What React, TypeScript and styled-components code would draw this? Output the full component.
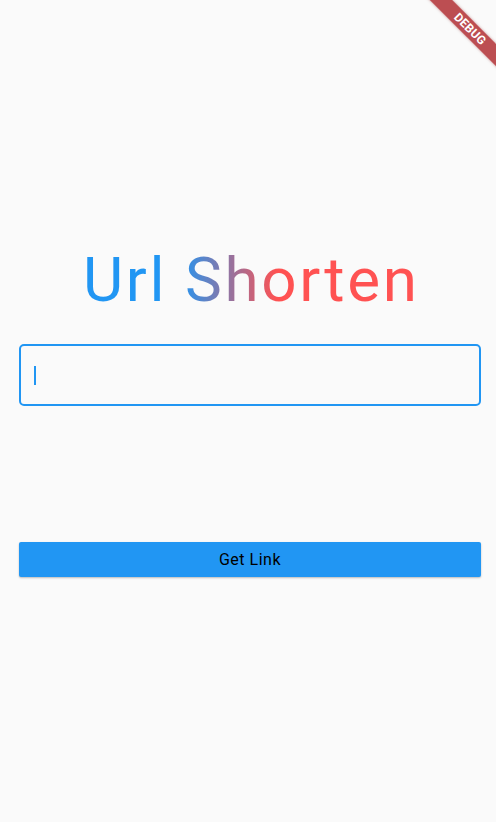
import React from "react";
import styled, { createGlobalStyle } from "styled-components";

const Global = createGlobalStyle`
  html, body { margin: 0; padding: 0; background: #fafafa; }
  body { font-family: Roboto, "Liberation Sans", sans-serif; }
`;

const Page = styled.div`
  position: relative;
  width: 496px;
  height: 822px;
  overflow: hidden;
  background: #fafafa;
  display: flex;
  flex-direction: column;
  padding: 0 15px 0 19px;
  box-sizing: border-box;
`;

const Title = styled.h1`
  margin: 240px 0 0 0;
  font-family: Roboto, "Liberation Sans", sans-serif;
  font-weight: 400;
  font-size: 62px;
  line-height: 80px;
  text-align: center;
  letter-spacing: 2.6px;
  padding-left: 2.6px;
  background: linear-gradient(90deg, #2196f3 0px, #2196f3 160px, #ff5252 258px, #ff5252 100%);
  -webkit-background-clip: text;
  background-clip: text;
  color: transparent;
`;

const Field = styled.div`
  margin-top: 24px;
  height: 62px;
  border: 2px solid #2196f3;
  border-radius: 5px;
  box-sizing: border-box;
  display: flex;
  align-items: center;
  padding-left: 13px;
`;

const Caret = styled.div`
  width: 2px;
  height: 19px;
  background: #2196f3;
`;

const Button = styled.button`
  margin-top: 136px;
  height: 35px;
  border: none;
  border-radius: 2px;
  background: #2196f3;
  color: #000;
  font-family: Roboto, "Liberation Sans", sans-serif;
  font-size: 16px;
  letter-spacing: 0.5px;
  box-shadow: 0 1px 2px rgba(0, 0, 0, 0.25);
  padding: 0;
`;

const Banner = styled.div`
  position: absolute;
  top: 21px;
  right: -34px;
  width: 120px;
  height: 16px;
  transform: rotate(45deg);
  background: rgba(175, 40, 45, 0.82);
  color: #fff;
  font-family: Roboto, "Liberation Sans", sans-serif;
  font-weight: 700;
  font-size: 12px;
  line-height: 16px;
  text-align: center;
  letter-spacing: 0.2px;
  box-shadow: 0 0 3px rgba(127, 0, 0, 0.35);
`;

export default function App() {
  return (
    <>
      <Global />
      <Page>
        <Title>Url Shorten</Title>
        <Field>
          <Caret />
        </Field>
        <Button>Get Link</Button>
        <Banner>DEBUG</Banner>
      </Page>
    </>
  );
}
